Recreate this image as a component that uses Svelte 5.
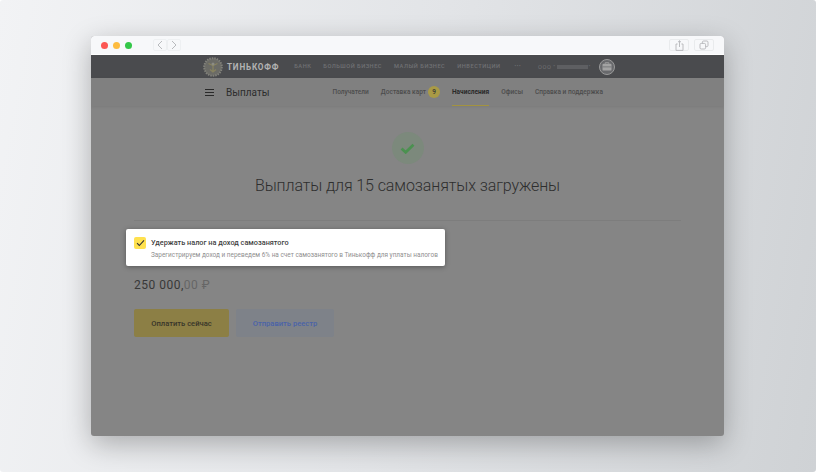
<script>
  const topLinks = ['Банк', 'Большой бизнес', 'Малый бизнес', 'Инвестиции'];
  const tabs = [
    { label: 'Получатели' },
    { label: 'Доставка карт', badge: 9 },
    { label: 'Начисления', active: true },
    { label: 'Офисы' },
    { label: 'Справка и поддержка' }
  ];
</script>

<div class="desktop">
  <div class="window">
    <div class="titlebar">
      <div class="lights">
        <span class="light red"></span>
        <span class="light yellow"></span>
        <span class="light green"></span>
      </div>
      <div class="arrows">
        <span class="arrow">
          <svg width="6" height="10" viewBox="0 0 6 10"><path d="M5 1 1 5l4 4" fill="none" stroke="#b9bbbe" stroke-width="1"/></svg>
        </span>
        <span class="arrow">
          <svg width="6" height="10" viewBox="0 0 6 10"><path d="M1 1l4 4-4 4" fill="none" stroke="#b9bbbe" stroke-width="1"/></svg>
        </span>
      </div>
      <div class="actions">
        <span class="action">
          <svg width="9" height="11" viewBox="0 0 9 11" fill="none" stroke="#b4b6b9" stroke-width=".9"><path d="M2.600 4H1v6.400h7V4H6.400"/><path d="M4.500 7V.8M3 2.200 4.500.8 6 2.200"/></svg>
        </span>
        <span class="action">
          <svg width="10" height="10" viewBox="0 0 10 10" fill="none" stroke="#b4b6b9" stroke-width=".9"><rect x="3.400" y="1" width="5.600" height="5.600" rx="1.200"/><rect x="1" y="3.400" width="5.600" height="5.600" rx="1.200" fill="#f7f8fa"/></svg>
        </span>
      </div>
    </div>

    <header class="topbar">
      <svg class="crest" width="20" height="20" viewBox="0 0 20 20">
        <circle cx="10" cy="10" r="8.800" fill="#6b6b66" stroke="#80807a" stroke-width="2" stroke-dasharray="1.500 1"/>
        <path d="M5.500 6.500 10 8.500l4.500-2M10 8.500v6M7 12.500l3 2.500 3-2.500" fill="none" stroke="#87825f" stroke-width="1.300"/>
        <circle cx="10" cy="7" r="1.500" fill="#8c8c84"/>
      </svg>
      <span class="wordmark">ТИНЬКОФФ</span>
      <nav class="toplinks">
        {#each topLinks as link}
          <span>{link}</span>
        {/each}
        <span class="dots">•••</span>
      </nav>
      <span class="company">ООО "<span class="hidden-name"></span>"</span>
      <span class="avatar">
        <svg width="10" height="9" viewBox="0 0 11 10">
          <path d="M3.500 2V.8h4V2" fill="none" stroke="#a3a3a3" stroke-width="1"/>
          <rect x=".5" y="2" width="10" height="7.500" rx="1" fill="#a3a3a3"/>
          <path d="M.5 5.400h10" stroke="#6a6b6e" stroke-width=".8"/>
        </svg>
      </span>
    </header>

    <div class="subnav">
      <span class="burger"><i></i><i></i><i></i></span>
      <span class="section">Выплаты</span>
      <nav class="tabs">
        {#each tabs as tab}
          <span class="tab" class:active={tab.active}>
            {tab.label}
            {#if tab.badge}<b class="badge">{tab.badge}</b>{/if}
          </span>
        {/each}
      </nav>
    </div>

    <main class="content">
      <div class="success">
        <svg width="15" height="11" viewBox="0 0 16 12"><path d="M1.500 6 6 10.200 14.500 1.800" fill="none" stroke="#4b9150" stroke-width="3"/></svg>
      </div>
      <h1>Выплаты для 15 самозанятых загружены</h1>
      <hr />

      <div class="tax-card">
        <span class="checkbox">
          <svg width="9" height="8" viewBox="0 0 9 8"><path d="M1 4.200 3.300 6.500 8 1.300" fill="none" stroke="#333" stroke-width="1.100"/></svg>
        </span>
        <div class="tax-text">
          <div class="tax-title">Удержать налог на доход самозанятого</div>
          <div class="tax-note">Зарегистрируем доход и переведем 6% на счет самозанятого в Тинькофф для уплаты налогов</div>
        </div>
      </div>

      <div class="amount">250 000,<span class="cents">00 ₽</span></div>

      <div class="buttons">
        <button class="pay">Оплатить сейчас</button>
        <button class="send">Отправить реестр</button>
      </div>
    </main>
  </div>
</div>

<style>
  :global(body) {
    margin: 0;
  }

  .desktop {
    width: 816px;
    height: 472px;
    padding: 36px 0 0 91px;
    box-sizing: border-box;
    overflow: hidden;
    border-radius: 3px;
    background: linear-gradient(100deg, #f2f3f5 0%, #e2e4e7 50%, #cfd2d5 100%);
    font-family: Roboto, "Liberation Sans", sans-serif;
  }

  .window {
    width: 633px;
    height: 400px;
    display: flex;
    flex-direction: column;
    border-radius: 3px;
    overflow: hidden;
    background: #858585;
    box-shadow: 0 8px 28px rgba(0, 0, 0, 0.28);
  }

  .titlebar {
    flex: none;
    height: 18px;
    padding: 0 10px;
    display: flex;
    align-items: center;
    background: #f7f8fa;
    border-bottom: 1px solid #ffffff;
  }

  .lights {
    display: flex;
    gap: 5px;
  }

  .light {
    width: 7px;
    height: 7px;
    border-radius: 50%;
  }

  .red { background: #fc5753; }
  .yellow { background: #fdbc40; }
  .green { background: #33c748; }

  .arrows {
    margin-left: 21px;
    display: flex;
  }

  .arrow {
    width: 12px;
    height: 10px;
    display: flex;
    align-items: center;
    justify-content: center;
    border: 1px solid #eef0f2;
    border-radius: 2px;
  }

  .actions {
    margin-left: auto;
    display: flex;
    gap: 5px;
  }

  .action {
    width: 18px;
    height: 10px;
    display: flex;
    align-items: center;
    justify-content: center;
    border: 1px solid #e9ebed;
    border-radius: 2px;
  }

  .topbar {
    flex: none;
    height: 23px;
    padding-left: 112px;
    display: flex;
    align-items: center;
    background: #4a4b4e;
  }

  .crest {
    flex: none;
  }

  .wordmark {
    margin-left: 4px;
    font-size: 8.200px;
    font-weight: 700;
    letter-spacing: 0.8px;
    color: #b3b3b3;
  }

  .toplinks {
    margin-left: 15px;
    display: flex;
    gap: 12px;
    font-size: 5.700px;
    font-weight: 500;
    letter-spacing: 0.5px;
    text-transform: uppercase;
    color: #707174;
  }

  .dots {
    margin-left: 2px;
    font-size: 4.500px;
    letter-spacing: 0.6px;
    line-height: 8px;
  }

  .company {
    margin-left: 17px;
    display: flex;
    align-items: center;
    font-size: 5.700px;
    letter-spacing: 0.5px;
    color: #707174;
  }

  .hidden-name {
    width: 31px;
    height: 4px;
    margin: 0 1px;
    background: #5e5f62;
  }

  .avatar {
    margin-left: 8px;
    width: 16px;
    height: 16px;
    box-sizing: border-box;
    display: flex;
    align-items: center;
    justify-content: center;
    border: 1px solid #9a9a9a;
    border-radius: 50%;
    background: #68696c;
  }

  .subnav {
    flex: none;
    height: 28px;
    padding-left: 114px;
    display: flex;
    align-items: center;
    background: #808080;
    box-shadow: 0 1px 3px rgba(0, 0, 0, 0.08);
  }

  .burger {
    width: 9px;
    display: flex;
    flex-direction: column;
    gap: 2px;
  }

  .burger i {
    height: 1px;
    background: #2a2a2a;
  }

  .section {
    margin-left: 12px;
    font-size: 10px;
    color: #2d2d2d;
  }

  .tabs {
    margin-left: 63px;
    align-self: stretch;
    display: flex;
    gap: 12px;
    font-size: 6.550px;
    font-weight: 500;
    color: #4c4c4c;
  }

  .tab {
    display: flex;
    align-items: center;
    gap: 2px;
    border-bottom: 1px solid transparent;
  }

  .tab.active {
    color: #2a2a2a;
    font-weight: 700;
    border-bottom-color: #a3933f;
  }

  .badge {
    width: 12px;
    height: 12px;
    display: flex;
    align-items: center;
    justify-content: center;
    border-radius: 50%;
    background: #a99a45;
    font-size: 6.500px;
    font-weight: 500;
    color: #333;
  }

  .content {
    flex: 1;
    padding: 26px 43px 0;
    display: flex;
    flex-direction: column;
  }

  .success {
    align-self: center;
    width: 32px;
    height: 32px;
    display: flex;
    align-items: center;
    justify-content: center;
    border-radius: 50%;
    background: #7c897c;
  }

  h1 {
    margin: 11px 0 0;
    font-size: 16px;
    line-height: 22px;
    font-weight: 300;
    letter-spacing: -0.1px;
    text-align: center;
    color: #2e2e2e;
  }

  hr {
    width: 100%;
    margin: 23px 0 0;
    border: 0;
    border-top: 1px solid #7d7d7d;
  }

  .tax-card {
    width: 319px;
    height: 37px;
    margin: 8px 0 0 -8px;
    display: flex;
    align-items: center;
    gap: 5px;
    padding-left: 8px;
    box-sizing: border-box;
    background: #ffffff;
    border-radius: 2px;
    box-shadow: 0 1px 5px rgba(0, 0, 0, 0.35);
  }

  .checkbox {
    flex: none;
    width: 12px;
    height: 12px;
    margin-top: -9px;
    display: flex;
    align-items: center;
    justify-content: center;
    border-radius: 2px;
    background: #ffe14f;
  }

  .tax-text {
    margin-top: 2px;
  }

  .tax-title {
    font-size: 7.300px;
    line-height: 11px;
    font-weight: 500;
    color: #3f3f3f;
  }

  .tax-note {
    margin-top: 3px;
    font-size: 6.450px;
    line-height: 9px;
    color: #8f8f8f;
  }

  .amount {
    margin-top: 11px;
    font-size: 12px;
    line-height: 16px;
    letter-spacing: 0.5px;
    color: #383838;
  }

  .cents {
    color: #666;
  }

  .buttons {
    margin-top: 16px;
    display: flex;
    gap: 7px;
  }

  button {
    height: 28px;
    border: 0;
    border-radius: 2px;
    font-family: inherit;
    font-size: 7.600px;
    font-weight: 500;
    padding: 0;
  }

  .pay {
    width: 95px;
    background: #8c7f45;
    color: #38352a;
  }

  .send {
    width: 98px;
    background: #7e8289;
    color: #4a62a8;
  }
</style>
